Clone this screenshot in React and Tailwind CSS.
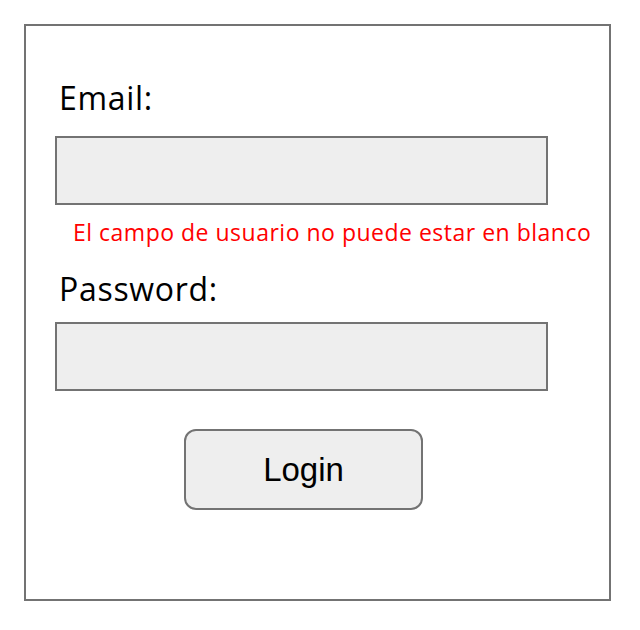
import React, { useState } from 'react';

export default function App() {
  const [email, setEmail] = useState('');
  const [password, setPassword] = useState('');

  const inputClass =
    'block w-[493px] h-[69px] bg-[#eeeeee] border-2 border-[#737373] px-3 text-2xl text-black outline-none';
  const labelClass =
    "block ml-[4px] text-[32px] leading-[32px] tracking-[0.7px] text-black font-['Open_Sans',sans-serif]";

  return (
    <div className="w-[640px] h-[630px] bg-white pt-[24px] pl-[24px]">
      <div className="w-[587px] h-[577px] border-2 border-[#737373] pt-[56px] pl-[29px] flex flex-col items-start">
        <label className={labelClass}>Email:</label>
        <input
          type="text"
          value={email}
          onChange={(e) => setEmail(e.target.value)}
          className={`${inputClass} mt-[22px]`}
        />
        <p className="ml-[18px] mt-[16px] text-[23px] leading-[23px] tracking-[0.5px] whitespace-nowrap text-[#ff0000] font-['Open_Sans',sans-serif]">
          El campo de usuario no puede estar en blanco
        </p>

        <label className={`${labelClass} mt-[29px]`}>Password:</label>
        <input
          type="password"
          value={password}
          onChange={(e) => setPassword(e.target.value)}
          className={`${inputClass} mt-[17px]`}
        />

        <button
          type="button"
          className="ml-[129px] mt-[38px] w-[239px] h-[81px] flex items-center justify-center rounded-[12px] bg-[#eeeeee] border-2 border-[#737373] text-[33px] text-black font-['Liberation_Sans',Arial,sans-serif]"
        >
          Login
        </button>
      </div>
    </div>
  );
}
